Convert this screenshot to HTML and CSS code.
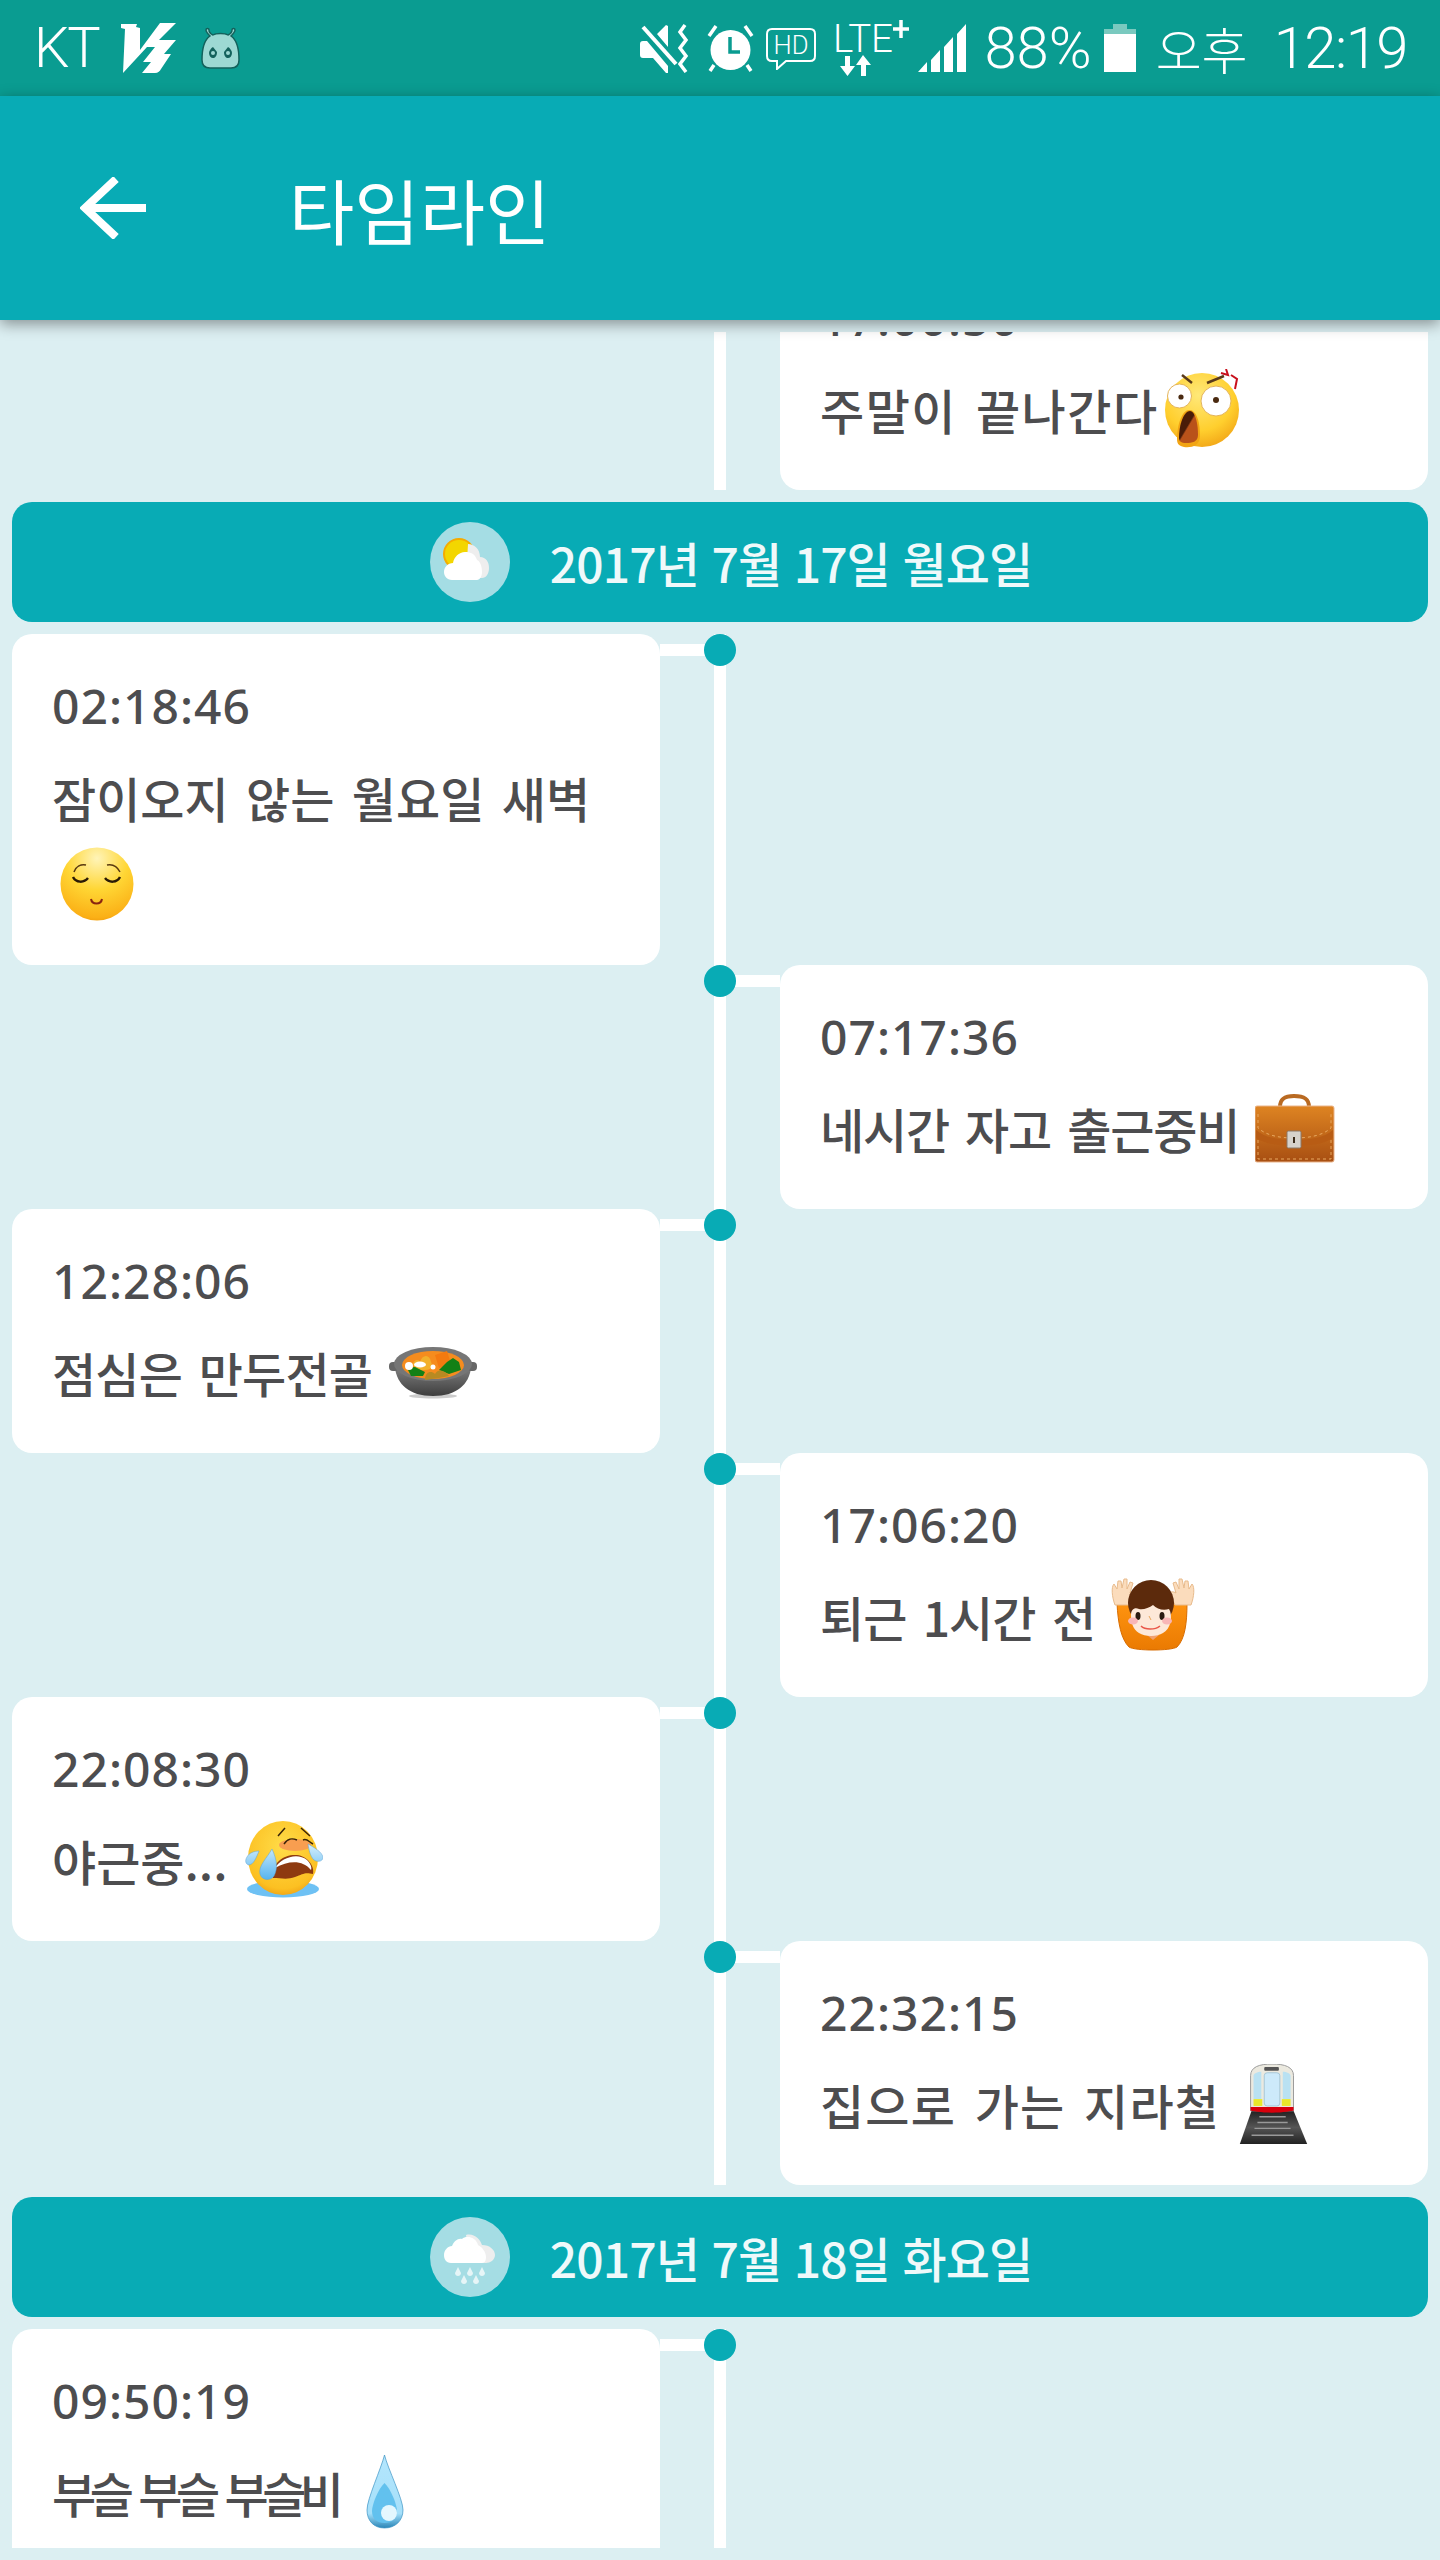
FILE: index.html
```html
<!DOCTYPE html>
<html lang="ko">
<head>
    <meta charset="UTF-8">
    <meta name="viewport" content="width=device-width, initial-scale=1.0">
    <title>타임라인</title>
    <link rel="stylesheet" href="styles.css">
</head>
<body>
    <div class="status-bar">
        <div class="status-left">
            <span class="carrier">KT</span>
            <svg class="ic-v3" width="55" height="50" viewBox="0 0 55 50"><path fill="#fff" d="M0 1H16L15 4L19 5V27L39 0H55L38 17H55L43 31H50L40 46C39 48 37 50 34 50H21L30 39H22L34 24H26L2 50L4 6L0 5Z"/></svg>
            <svg class="ic-bug" width="39" height="42" viewBox="0 0 39 42"><path fill="#9dd9d3" stroke="#14625c" stroke-width="1.5" d="M9 9C6 6 5 5 5 3C5 1 8 1 8 3C8 5 10 7 12 8C15 6 24 6 27 8C29 7 31 5 31 3C31 1 34 1 34 3C34 5 33 6 30 9C36 13 38 24 38 33C38 39 35 41 30 41H9C4 41 1 39 1 33C1 24 3 13 9 9Z"/><path fill="#14625c" d="M12 20L16 25C16 29 14 31 12 31C10 31 8 29 8 26C8 24 10 21 12 20ZM27 20C29 21 31 24 31 26C31 29 29 31 27 31C25 31 23 29 23 25Z"/><circle cx="12" cy="26" r="2" fill="#9dd9d3"/><circle cx="27" cy="26" r="2" fill="#9dd9d3"/></svg>
        </div>
        <div class="status-right">
            <svg class="ic-mute" width="52" height="49" viewBox="0 0 52 49"><path fill="#fff" d="M0 20C0 18 1 17 3 17H7L28 42V49H26L13 34H3C1 34 0 33 0 31ZM28 2V23L17 10L26 1Z"/><path stroke="#fff" stroke-width="4" fill="none" d="M3 3L36 40"/><path stroke="#fff" stroke-width="3.5" fill="none" d="M45 1L40 8L46 16L40 24L46 32L40 40L46 48"/></svg>
            <svg class="ic-alarm" width="47" height="47" viewBox="0 0 47 47"><ellipse cx="23.500" cy="25" rx="20" ry="20" fill="#fff"/><path stroke="#0a9c91" stroke-width="3.500" fill="none" d="M23 12V27H33"/><path stroke="#fff" stroke-width="3.500" fill="none" d="M9 1L2 11M38 1L45 11M7 40L3 46M40 40L44 46"/></svg>
            <svg class="ic-hd" width="50" height="42" viewBox="0 0 50 42"><path fill="none" stroke="#fff" stroke-width="2" d="M6 1H44C47 1 49 3 49 6V28C49 31 47 33 44 33H20L11 41V33H6C3 33 1 31 1 28V6C1 3 3 1 6 1Z"/><text class="ic-text" x="25" y="26" font-size="26" text-anchor="middle" textLength="35" lengthAdjust="spacingAndGlyphs">HD</text></svg>
            <svg class="ic-lte" width="76" height="66" viewBox="0 -10 76 66"><text class="ic-text" x="0" y="32" font-size="38" textLength="60" lengthAdjust="spacingAndGlyphs">LTE</text><path fill="none" stroke="#fff" stroke-width="3.500" d="M68 0V18M60 9H76"/><path fill="#fff" d="M12 36H17V46H22L14.500 56L7 46H12ZM30 35L38 45H33V56H28V45H23Z"/></svg>
            <svg class="ic-signal" width="48" height="48" viewBox="0 0 48 48"><path fill="#fff" d="M0 48L9 38V48ZM13 36L22 26V48H13ZM26 23L35 13V48H26ZM39 10L48 0V48H39Z"/></svg>
            <span class="status-text battery-text">88%</span>
            <svg class="ic-battery" width="32" height="48" viewBox="0 0 32 48"><path fill="#7ac9bf" d="M9 0H23V5H32V10H0V5H9Z"/><rect y="10" width="32" height="38" fill="#fff"/></svg>
            <span class="status-text ampm">오후</span>
            <span class="status-text clock">12:19</span>
        </div>
    </div>

    <header class="app-bar">
        <svg class="back-arrow" width="66" height="62" viewBox="0 0 66 62"><path fill="none" stroke="#fff" stroke-width="8" d="M66 31H6M36 2L5 31L36 60"/></svg>
        <h1 class="app-title">타임라인</h1>
    </header>

    <main class="content">
        <div class="timeline">
            <!-- 7/16 tail, scrolled partly out of view -->
            <div class="entry entry-right entry-scrolled">
                <div class="rail"><span class="dot"></span></div>
                <div class="card">
                    <div class="time">17:00:50</div>
                    <p class="msg msg-b">주말이 끝나간다<svg class="emoji emoji-tight" width="78" height="80" viewBox="0 0 78 80"><defs><radialGradient id="fa" cx=".45" cy=".3" r=".8"><stop offset="0" stop-color="#ffe878"/><stop offset=".6" stop-color="#ffcf2e"/><stop offset="1" stop-color="#ee9a10"/></radialGradient><linearGradient id="ma" x1="0" y1="0" x2="1" y2="1"><stop offset=".45" stop-color="#4a1c08"/><stop offset=".5" stop-color="#b9521a"/></linearGradient></defs><circle cx="37" cy="41" r="37" fill="url(#fa)"/><circle cx="14.500" cy="27" r="12" fill="#fff" stroke="#e4b45a"/><circle cx="51" cy="32" r="15" fill="#fff" stroke="#e4b45a"/><circle cx="16" cy="28" r="2.600" fill="#4a2a10"/><circle cx="51" cy="31" r="3" fill="#4a2a10"/><path fill="#f2a413" d="M12 70C12 54 18 40 25 41C32 42 35 54 35 67C35 77 26 79 19 78C14 77 12 75 12 70Z"/><path fill="url(#ma)" d="M14 69C14 55 19 42 25 42C30 42 33 54 33 66C33 73 27 74 21 74C16 74 14 72 14 69Z"/><path fill="none" stroke="#5a3a1a" stroke-width="2.500" d="M17 6L27 14M42 14L59 7"/><path fill="none" stroke="#c8101c" stroke-width="2" d="M56 4L63 6L61 0M66 6L72 10L70 20"/></svg></p>
                </div>
            </div>

            <div class="date-bar">
                <svg class="weather" width="80" height="80" viewBox="0 0 80 80"><circle cx="40" cy="40" r="40" fill="#a5dde4"/><circle cx="29" cy="32" r="16" fill="#f5ab00"/><circle cx="29" cy="32" r="14" fill="#f3d600"/><path fill="#eeeeee" d="M38 22C44 22 50 27 50 35C56 35 59 40 59 46C59 52 56 56 52 56H36Z"/><path fill="#fff" d="M22 58C17 58 14 54 14 50C14 45 18 41 23 41C24 35 29 30 35 30C41 30 45 32 47 38C50 39 52 44 52 50C52 54 50 58 47 58Z"/></svg>
                <span class="date-text">2017년 7월 17일 월요일</span>
            </div>

            <div class="entry entry-left">
                <div class="card">
                    <div class="time">02:18:46</div>
                    <p class="msg">잠이오지 않는 월요일 새벽 <svg class="emoji emoji-wrapped" width="74" height="80" viewBox="0 -3 74 80"><defs><radialGradient id="fb" cx=".5" cy=".15" r=".95"><stop offset="0" stop-color="#fff4b8"/><stop offset=".45" stop-color="#ffd634"/><stop offset=".85" stop-color="#fbb016"/><stop offset="1" stop-color="#e88a04"/></radialGradient></defs><circle cx="37" cy="37" r="36.500" fill="url(#fb)"/><path fill="none" stroke="#5a3a10" stroke-width="1.500" d="M14 25C16 19 21 17 26 18M47 18C52 17 57 19 60 25"/><path fill="none" stroke="#2a1a06" stroke-width="2.500" d="M13 30C16 36 24 36 28 31M45 31C49 36 57 36 60 30"/><path fill="none" stroke="#8a2410" stroke-width="2" d="M31 52C32 58 41 58 42 52"/></svg></p>
                </div>
                <div class="rail"><span class="dot"></span></div>
            </div>

            <div class="entry entry-right">
                <div class="rail"><span class="dot"></span></div>
                <div class="card">
                    <div class="time">07:17:36</div>
                    <p class="msg msg-c">네시간 자고 출근중비 <svg class="emoji" width="80" height="80" viewBox="0 -6 80 80"><defs><linearGradient id="ba" x1="0" y1="0" x2="0" y2="1"><stop offset="0" stop-color="#de8422"/><stop offset="1" stop-color="#a84f12"/></linearGradient></defs><path fill="none" stroke="#b96a22" stroke-width="4" d="M25 13C25 4 31 2 39 2C48 2 54 4 54 13"/><rect y="12" width="79" height="56" rx="2" fill="url(#ba)" stroke="#eab48a"/><path fill="#b85c14" d="M1 36C10 44 25 46 39 46C54 46 69 44 78 36V44C69 50 54 52 39 52C25 52 10 50 1 44Z"/><path fill="none" stroke="#e8a860" stroke-dasharray="3 3" d="M3 20V34C12 42 26 44 39 44C53 44 67 42 76 34V20M3 46V65H76V46"/><rect x="32" y="37" width="14" height="17" rx="1.500" fill="#d6d2cc" stroke="#8a7868"/><rect x="38" y="43" width="2" height="6" fill="#3a2a1a"/></svg></p>
                </div>
            </div>

            <div class="entry entry-left">
                <div class="card">
                    <div class="time">12:28:06</div>
                    <p class="msg msg-d">점심은 만두전골 <svg class="emoji" width="88" height="80" viewBox="0 -14 88 80"><defs><linearGradient id="pa" x1="0" y1="0" x2="0" y2="1"><stop offset="0" stop-color="#7c7c7c"/><stop offset="1" stop-color="#3e3e3e"/></linearGradient></defs><ellipse cx="44" cy="50" rx="24" ry="2.500" fill="#ccc"/><path fill="url(#pa)" d="M6 22C8 38 20 50 44 50C68 50 80 38 82 22Z"/><rect y="16" width="10" height="9" rx="4" fill="#666"/><rect x="78" y="16" width="10" height="9" rx="4" fill="#666"/><ellipse cx="44" cy="18" rx="39" ry="17" fill="#767676"/><ellipse cx="44" cy="19" rx="31" ry="14" fill="#f58c1e"/><path fill="#f47a10" d="M46 9L58 5L62 18L50 22Z"/><path fill="#f2b02c" d="M24 18C25 13 30 13 31 16C33 8 41 8 42 16C44 20 43 24 36 24H26Z"/><path fill="#138016" d="M18 22L26 21L36 26L34 30H22ZM50 24L58 16L64 12L70 16L72 24L60 28Z"/><path fill="#b88a22" d="M36 34C36 26 42 24 46 28C49 22 56 24 60 30L50 32Z"/><circle cx="20" cy="20" r="4" fill="#fff"/><ellipse cx="31" cy="18.500" rx="6" ry="3" fill="#fff"/><circle cx="44" cy="21" r="2.500" fill="#fff"/></svg></p>
                </div>
                <div class="rail"><span class="dot"></span></div>
            </div>

            <div class="entry entry-right">
                <div class="rail"><span class="dot"></span></div>
                <div class="card">
                    <div class="time">17:06:20</div>
                    <p class="msg msg-e">퇴근 1시간 전 <svg class="emoji" width="84" height="80" viewBox="0 -3 84 80"><defs><linearGradient id="sa" x1="0" y1="0" x2="0" y2="1"><stop offset="0" stop-color="#ff9410"/><stop offset="1" stop-color="#ea7a02"/></linearGradient></defs><path fill="url(#sa)" stroke="#d86c00" d="M6 24H24C25 40 30 54 42 58C54 54 58 40 60 24H76C76 44 74 60 66 68C60 72 24 72 18 68C10 60 7 44 6 24Z"/><path fill="#fbdcbc" stroke="#e8bb8c" d="M4 26C1 18 0 8 3 5L6 10L7 2H10L11 9L13 0H16L16 10L19 3L22 4L19 14C22 12 25 13 26 14L20 26ZM80 26C83 18 84 8 81 5L78 10L77 2H74L73 9L71 0H68L68 10L65 3L62 4L65 14C62 12 59 13 58 14L64 26Z"/><path fill="#f0a070" d="M36 56H48L42 61Z"/><circle cx="40" cy="24" r="23" fill="#5c2a0c"/><path fill="#fde8d8" d="M20 36C20 30 24 28 28 30C32 31 38 29 42 26C46 30 52 32 58 30C62 36 60 50 52 54C46 58 34 58 28 54C22 50 20 44 20 36Z"/><ellipse cx="27" cy="37" rx="2.500" ry="4" fill="#2a1a10"/><ellipse cx="51" cy="37" rx="2.500" ry="4" fill="#2a1a10"/><ellipse cx="22" cy="42" rx="5" ry="3.500" fill="#f8b6b6"/><ellipse cx="56" cy="42" rx="5" ry="3.500" fill="#f8b6b6"/><path fill="none" stroke="#e9574a" stroke-width="1.500" d="M30 47C34 51 44 51 49 47"/><path fill="none" stroke="#e8a860" d="M38 37L40 41"/></svg></p>
                </div>
            </div>

            <div class="entry entry-left">
                <div class="card">
                    <div class="time">22:08:30</div>
                    <p class="msg">야근중... <svg class="emoji" width="78" height="80" viewBox="0 -2 78 80"><defs><radialGradient id="fc" cx=".5" cy=".35" r=".75"><stop offset="0" stop-color="#ffdc48"/><stop offset=".75" stop-color="#fcc022"/><stop offset="1" stop-color="#e98f0c"/></radialGradient><linearGradient id="ta" x1="0" y1="0" x2="0" y2="1"><stop offset="0" stop-color="#d6effc"/><stop offset="1" stop-color="#56b4f0"/></linearGradient></defs><ellipse cx="38" cy="67" rx="36" ry="8.500" fill="#6ec1f4"/><ellipse cx="38" cy="36" rx="35" ry="37" fill="url(#fc)"/><ellipse cx="50" cy="23" rx="16" ry="6" fill="#f89e50"/><path fill="none" stroke="#3a2408" stroke-width="1.500" d="M33 14L40 6M56 6L65 14M39 22C43 16 47 16 52 18M58 18C62 16 64 20 68 22"/><path fill="#8e3a10" d="M28 56C26 40 40 32 52 33C62 34 70 44 68 52C60 50 58 52 50 55C42 58 36 56 28 56Z"/><path fill="#fff" d="M30 46C36 36 52 30 62 38C66 42 67 46 66 48C58 38 44 38 30 46Z"/><path fill="url(#ta)" stroke="#5aa2d4" stroke-width=".5" d="M27 27C32 38 33 46 29 54C26 59 17 59 15 52C13 44 22 36 27 27ZM14 29C11 36 9 42 4 43C0 42 0 38 2 35C4 31 9 29 14 29ZM63 22C68 25 78 30 78 36C77 40 72 40 69 38C65 34 64 28 63 22Z"/></svg></p>
                </div>
                <div class="rail"><span class="dot"></span></div>
            </div>

            <div class="entry entry-right">
                <div class="rail"><span class="dot"></span></div>
                <div class="card">
                    <div class="time">22:32:15</div>
                    <p class="msg msg-f">집으로 가는 지라철 <svg class="emoji" width="70" height="80" viewBox="0 0 70 82"><defs><linearGradient id="ra" x1="0" y1="0" x2="0" y2="1"><stop offset="0" stop-color="#222"/><stop offset=".5" stop-color="#555"/><stop offset="1" stop-color="#222"/></linearGradient></defs><path fill="url(#ra)" d="M12 48H55L69 82H0Z"/><path stroke="#999" stroke-width="1.500" d="M20 54H47M18 60H49M15 66H52M12 73H55"/><path fill="#ebe9df" stroke="#999" d="M11 12C11 3 20 0 33 0C46 0 55 3 55 12V48H11Z"/><rect x="25" y="3" width="15" height="4" rx="1" fill="#555"/><path fill="#b9e1f2" d="M14 12C14 10 18 8 22 8V36H14ZM44 8C48 8 52 10 52 12V36H44Z"/><rect x="25" y="9" width="16" height="34" rx="3" fill="#cdeafa" stroke="#a6c6d6"/><rect x="14" y="36" width="9" height="7" fill="#e9e92a"/><rect x="43" y="36" width="9" height="7" fill="#e9e92a"/><path fill="#d8000c" d="M11 44H55V48C55 48 44 50 33 50C22 50 11 48 11 48Z"/></svg></p>
                </div>
            </div>

            <div class="date-bar">
                <svg class="weather" width="80" height="80" viewBox="0 0 80 80"><circle cx="40" cy="40" r="40" fill="#a5dde4"/><path fill="#eeeeee" d="M36 18C44 16 50 22 52 28C60 28 65 33 65 38C65 43 60 46 56 46H40Z"/><path fill="#fff" d="M21 46C16 46 14 42 14 38C14 33 18 29 22 29C24 24 28 21 32 22C36 18 46 20 48 28C52 30 56 35 56 40C56 43 55 46 52 46Z"/><path fill="#e6f5f7" d="M28 50L31 56C31 60 25 60 25 56ZM40 50L43 56C43 60 37 60 37 56ZM52 50L55 56C55 60 49 60 49 56ZM34 58L37 64C37 68 31 68 31 64ZM46 58L49 64C49 68 43 68 43 64Z"/></svg>
                <span class="date-text">2017년 7월 18일 화요일</span>
            </div>

            <div class="entry entry-left">
                <div class="card">
                    <div class="time">09:50:19</div>
                    <p class="msg msg-g">부슬 부슬 부슬비 <svg class="emoji emoji-drop" width="38" height="80" viewBox="0 -3 38 80"><defs><linearGradient id="da" x1="0" y1="0" x2="0" y2="1"><stop offset="0" stop-color="#b4e6fd"/><stop offset=".8" stop-color="#a6e0fa"/><stop offset="1" stop-color="#2a86b8"/></linearGradient></defs><path fill="url(#da)" stroke="#3c94c4" stroke-width=".7" d="M18.500 0C22 14 37 44 37 55C37 66 29 73 18.500 73C8 73 1 66 1 55C1 44 15 14 18.500 0Z"/><path fill="#62c1ee" d="M18.500 28C25 34 31 50 31 56C31 64 26 68 18.500 68C11 68 6 64 6 56C6 50 12 34 18.500 28Z"/><circle cx="23" cy="58" r="8" fill="#e4f7fe"/></svg></p>
                </div>
                <div class="rail"><span class="dot"></span></div>
            </div>
        </div>
    </main>
</body>
</html>
```

FILE: styles.css
```css
html, body {
    margin: 0;
    padding: 0;
}
body {
    width: 1440px;
    height: 2560px;
    display: flex;
    flex-direction: column;
    overflow: hidden;
    background-color: #dceff2;
    font-family: "Noto Sans CJK KR", "Noto Sans", sans-serif;
    color: #4d4d4f;
}

/* status bar */
.status-bar {
    flex: none;
    height: 96px;
    display: flex;
    justify-content: space-between;
    align-items: center;
    background-color: #0a9c91;
    color: #fff;
}
.status-left {
    display: flex;
    align-items: center;
    padding-left: 34px;
}
.status-right {
    display: flex;
    align-items: center;
    padding-right: 33px;
}
.carrier, .status-text {
    font-family: Roboto, sans-serif;
    font-weight: 300;
    font-size: 58px;
    line-height: 96px;
    white-space: nowrap;
}
.carrier {
    font-size: 56px;
    letter-spacing: -2px;
}
.ic-text {
    font-family: Roboto, sans-serif;
    font-weight: 300;
    fill: #fff;
}
.ic-v3 { margin-left: 22px; }
.ic-bug { margin-left: 25px; }
.ic-alarm { margin-left: 15px; }
.ic-hd { margin-left: 12px; margin-top: 2px; }
.ic-lte { margin-left: 17px; margin-top: -10px; }
.ic-signal { margin-left: 9px; }
.battery-text { margin-left: 18px; }
.ic-battery { margin-left: 12px; }
.ampm {
    margin-left: 20px;
    font-family: "Noto Sans CJK KR", sans-serif;
    font-size: 50px;
}
.clock {
    margin-left: 26px;
    letter-spacing: -1.5px;
}

/* app bar */
.app-bar {
    flex: none;
    position: relative;
    z-index: 2;
    height: 224px;
    display: flex;
    align-items: center;
    padding-left: 80px;
    background-color: #08abb5;
    box-shadow: 0 4px 14px rgba(0, 0, 0, 0.4);
}
.back-arrow { flex: none; }
.app-title {
    margin: 0 0 0 143px;
    font-size: 71px;
    font-weight: 400;
    color: #fff;
}

/* timeline */
.content {
    flex: 1;
    min-height: 0;
    padding: 12px 0;
}
.timeline {
    height: 100%;
    padding: 0 12px;
    overflow: hidden;
}
.entry {
    display: grid;
    grid-template-columns: 648px 120px 648px;
}
.entry-scrolled { margin-top: -86px; }
.entry-right .rail { grid-column: 2; }
.entry-right .card { grid-column: 3; }
.rail {
    background-image: linear-gradient(#fff, #fff), linear-gradient(#fff, #fff);
    background-repeat: no-repeat;
    background-size: 12px 100%, 60px 12px;
}
.entry-left .rail { background-position: center top, left 10px; }
.entry-right .rail { background-position: center top, right 10px; }
.dot {
    display: block;
    width: 32px;
    height: 32px;
    margin: 0 auto;
    border-radius: 50%;
    background-color: #08abb5;
}
.card {
    padding: 40px 40px 37px;
    background-color: #fff;
    border-radius: 20px;
}
.time {
    height: 60px;
    margin-bottom: 20px;
    font-family: "Noto Sans", sans-serif;
    font-size: 48px;
    font-weight: 500;
    line-height: 64px;
    letter-spacing: 1px;
}
.msg {
    margin: 0;
    font-size: 48px;
    font-weight: 500;
    line-height: 87px;
    word-spacing: 4px;
}
.msg-b { letter-spacing: 1.5px; }
.msg-c { letter-spacing: -1.2px; }
.msg-d { letter-spacing: -0.8px; }
.msg-e { letter-spacing: -1px; }
.msg-f { letter-spacing: 1.2px; }
.msg-g { letter-spacing: -6.5px; }
.emoji { vertical-align: -19px; }
.emoji-tight { margin-left: 6px; }
.emoji-wrapped { margin-left: 8px; }
.emoji-drop { margin-left: 18px; }
.date-bar {
    height: 120px;
    margin: 12px 0;
    padding-left: 22px;
    display: flex;
    justify-content: center;
    align-items: center;
    gap: 40px;
    background-color: #08abb5;
    border-radius: 20px;
}
.date-text {
    font-size: 48px;
    font-weight: 500;
    letter-spacing: -0.9px;
    color: #eff9fa;
}
```
